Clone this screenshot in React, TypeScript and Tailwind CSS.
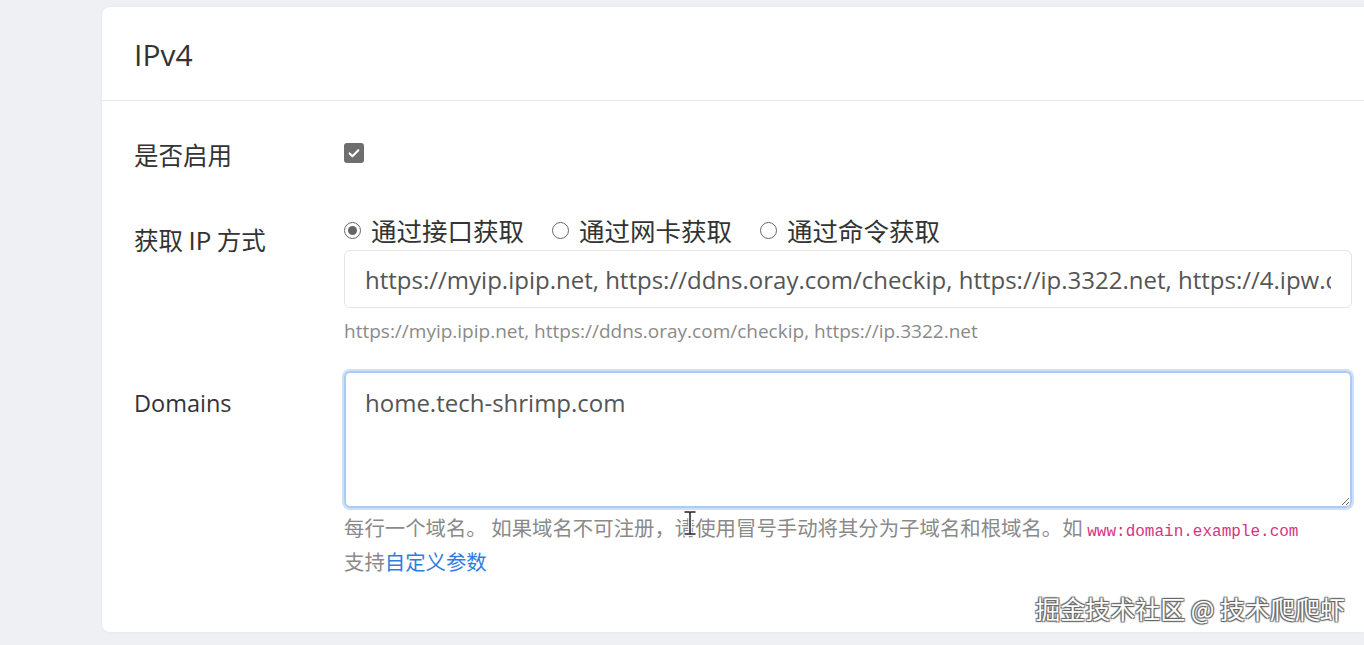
import { useState } from 'react'

const sans = '"Open Sans", "Noto Sans CJK SC", sans-serif'
const cjk = '"Noto Sans CJK SC", sans-serif'

const ipUrls = 'https://myip.ipip.net, https://ddns.oray.com/checkip, https://ip.3322.net, https://4.ipw.cn'
const ipHint = 'https://myip.ipip.net, https://ddns.oray.com/checkip, https://ip.3322.net'

function Radio({ checked, label }: { checked?: boolean; label: string }) {
  return (
    <label className="flex items-center gap-[10px] mr-[28px]">
      <span className="w-[17px] h-[17px] rounded-full border-[1.5px] border-[#666] flex items-center justify-center bg-white">
        {checked && <span className="w-[9px] h-[9px] rounded-full bg-[#666]" />}
      </span>
      <span className="text-[25.5px] text-[#333] leading-[34px]" style={{ fontFamily: cjk }}>{label}</span>
    </label>
  )
}

export default function App() {
  const [urls, setUrls] = useState(ipUrls)
  const [domains, setDomains] = useState('home.tech-shrimp.com')

  return (
    <div className="w-[1364px] h-[645px] bg-[#eef0f4] pt-[7px] pl-[102px] overflow-hidden relative" style={{ fontFamily: sans }}>
      <div className="bg-white rounded-l-[8px] h-[625px] shadow-[0_0_4px_rgba(0,0,0,0.04)]">
        {/* header */}
        <div className="h-[94px] border-b border-[#e6e8ec] pl-[32px] flex items-center">
          <h2 className="text-[30px] font-medium text-[#333] pt-[2px]">IPv4</h2>
        </div>

        <div className="pl-[32px] pr-[12px] pt-[37px]">
          {/* enabled */}
          <div className="flex">
            <div className="w-[210px] shrink-0 text-[24.5px] leading-[34px] text-[#333]" style={{ fontFamily: cjk }}>是否启用</div>
            <div className="pt-[5px]">
              <span className="w-[20px] h-[20px] rounded-[3px] bg-[#6e6e6e] flex items-center justify-center">
                <svg width="14" height="14" viewBox="0 0 16 16" fill="none">
                  <path d="M3 8.5l3.2 3.2L13 4.8" stroke="#fff" strokeWidth="2.4" strokeLinecap="round" strokeLinejoin="round" />
                </svg>
              </span>
            </div>
          </div>

          {/* ip method */}
          <div className="flex mt-[41px]">
            <div className="w-[210px] shrink-0 pt-[10px] text-[24.5px] leading-[34px] text-[#333] whitespace-nowrap" style={{ fontFamily: cjk }}>
              获取 IP 方式
            </div>
            <div className="flex-1 min-w-0">
              <div className="flex items-center">
                <Radio checked label="通过接口获取" />
                <Radio label="通过网卡获取" />
                <Radio label="通过命令获取" />
              </div>
              <input
                value={urls}
                onChange={e => setUrls(e.target.value)}
                className="mt-[3px] block w-[1008px] h-[58px] border border-[#e3e5e9] rounded-[6px] px-[20px] text-[24px] text-[#555] outline-none"
                style={{ fontFamily: sans }}
              />
              <div className="mt-[10px] text-[19px] leading-[26px] text-[#8a8a8a] whitespace-nowrap">{ipHint}</div>
            </div>
          </div>

          {/* domains */}
          <div className="flex mt-[27px]">
            <div className="w-[210px] shrink-0 pt-[15px] text-[23.5px] leading-[34px] text-[#333]">Domains</div>
            <div className="flex-1 min-w-0">
              <textarea
                value={domains}
                onChange={e => setDomains(e.target.value)}
                className="block w-[1008px] h-[137px] border-2 border-[#a9cbf5] rounded-[6px] px-[19px] pt-[14px] text-[24px] leading-[32px] text-[#555] outline-none shadow-[0_0_0_2px_rgba(170,204,245,0.6)] resize-y"
                style={{ fontFamily: sans }}
              />
              <div className="mt-[5px] text-[20.4px] leading-[29px] text-[#8a8a8a]" style={{ fontFamily: cjk }}>
                <div className="whitespace-nowrap">
                  每行一个域名。 如果域名不可注册，请使用冒号手动将其分为子域名和根域名。如{' '}
                  <code className="text-[16px] text-[#d63384]" style={{ fontFamily: '"Liberation Mono", "DejaVu Sans Mono", monospace' }}>www:domain.example.com</code>
                </div>
                <div>
                  支持<a href="#" className="text-[#2f7de1]">自定义参数</a>
                </div>
              </div>
            </div>
          </div>
        </div>
      </div>

      {/* mouse i-beam cursor */}
      <svg className="absolute left-[683px] top-[510px]" width="14" height="26" viewBox="0 0 14 26" fill="none">
        <path d="M2 2h4M8 2h4M7 2v22M2 24h4M8 24h4" stroke="#fff" strokeWidth="3.5" strokeLinecap="round" />
        <path d="M2 2h4M8 2h4M7 2v22M2 24h4M8 24h4" stroke="#222" strokeWidth="1.5" strokeLinecap="round" />
      </svg>

      {/* watermark */}
      <div
        className="absolute right-[19px] top-[590px] text-[25px] leading-[36px] text-white whitespace-nowrap"
        style={{ fontFamily: cjk, textShadow: '1px 1px 1px #666, -1px -1px 1px #666, 1px -1px 1px #666, -1px 1px 1px #666' }}
      >
        掘金技术社区 @ 技术爬爬虾
      </div>
    </div>
  )
}
